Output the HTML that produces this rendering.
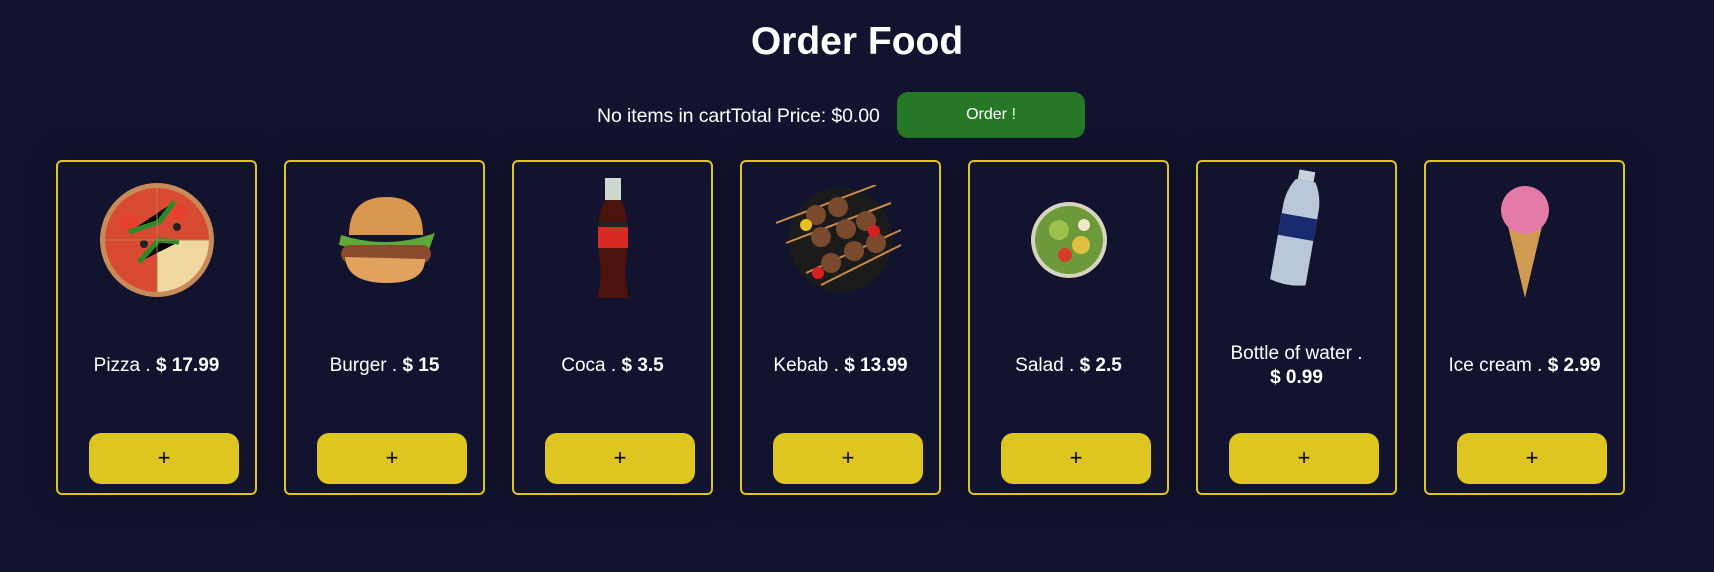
<!DOCTYPE html>
<html><head><meta charset="utf-8"><style>
*{margin:0;padding:0;box-sizing:border-box}
body{width:1714px;height:572px;background:#12132f;font-family:"Liberation Sans",sans-serif;color:#fff;position:relative;overflow:hidden}
h1{position:absolute;top:20px;left:0;width:1714px;text-align:center;font-size:39px;font-weight:bold}
.cart{position:absolute;left:597px;top:105px;font-size:19.5px;letter-spacing:-0.1px}
.order{position:absolute;left:897px;top:92px;width:188px;height:46px;background:#267826;border-radius:11px;color:#fff;font-size:16px;text-align:center;line-height:46px}
.card{position:absolute;top:160px;width:201px;height:335px;border:2px solid #e0c41f;border-radius:6px;box-shadow:0 0 30px rgba(0,0,0,.35)}
.img{position:absolute;left:0;top:8px;width:197px;height:140px;display:flex;align-items:center;justify-content:center}
.name{position:absolute;left:0;width:197px;top:192px;text-align:center;font-size:19px;line-height:24px}
.name b{font-weight:bold}
.btn{position:absolute;left:31px;top:271px;width:150px;height:51px;background:#dfc520;border-radius:12px;color:#000;font-size:22px;text-align:center;line-height:50px}
</style></head><body>
<h1>Order Food</h1>
<div class="cart">No items in cartTotal Price: $0.00</div>
<div class="order">Order !</div>

<div class="card" style="left:56px"><div class="img"><svg width="116" height="116" viewBox="0 0 116 116"><circle cx="58" cy="58" r="57" fill="#c98a5a"/><circle cx="58" cy="58" r="52" fill="#d94a33"/><path d="M58 58 L110 58 A52 52 0 0 1 58 110Z" fill="#f1d7a0"/><circle cx="30" cy="40" r="9" fill="#e8402e"/><circle cx="80" cy="30" r="8" fill="#e8402e"/><circle cx="45" cy="62" r="4" fill="#222"/><circle cx="78" cy="45" r="4" fill="#222"/><path d="M30 50 L60 40 L75 20 M40 80 L60 58 L80 60" stroke="#2a8a2a" stroke-width="5"/><path d="M6 58H110M58 6V110" stroke="#b5804f" stroke-width="1"/></svg></div><div class="name">Pizza . <b>$ 17.99</b></div><div class="btn">+</div></div>

<div class="card" style="left:284px"><div class="img"><svg width="116" height="90" viewBox="0 0 116 90"><path d="M14 40 Q60 55 108 38 L100 60 Q60 62 12 50Z" fill="#5fa83a"/><path d="M22 40 Q22 2 60 2 Q96 2 96 40Z" fill="#d9964d"/><rect x="14" y="50" width="90" height="18" rx="9" fill="#8a4a2e"/><path d="M18 62 Q20 88 60 88 Q98 88 98 64Z" fill="#e0a25c"/></svg></div><div class="name">Burger . <b>$ 15</b></div><div class="btn">+</div></div>

<div class="card" style="left:512px"><div class="img"><svg width="40" height="124" viewBox="0 0 40 124"><path d="M14 0H26V20Q34 30 34 46V80Q30 96 36 120H4Q10 96 6 80V46Q6 30 14 20Z" fill="#4a140c"/><rect x="12" y="0" width="16" height="22" fill="#cfd8d0"/><rect x="5" y="44" width="30" height="26" fill="#d82a23"/><rect x="5" y="44" width="30" height="5" fill="#222"/></svg></div><div class="name">Coca . <b>$ 3.5</b></div><div class="btn">+</div></div>

<div class="card" style="left:740px"><div class="img"><svg width="130" height="110" viewBox="0 0 130 110"><circle cx="65" cy="55" r="52" fill="#1b1b1b"/><path d="M0 38 L100 0 M10 58 L115 18 M30 88 L125 45 M45 100 L125 60" stroke="#c98a4a" stroke-width="2"/><g fill="#7a4a2e"><circle cx="40" cy="30" r="10"/><circle cx="62" cy="22" r="10"/><circle cx="45" cy="52" r="10"/><circle cx="70" cy="44" r="10"/><circle cx="90" cy="36" r="10"/><circle cx="55" cy="78" r="10"/><circle cx="78" cy="66" r="10"/><circle cx="100" cy="58" r="10"/></g><circle cx="30" cy="40" r="6" fill="#e8c020"/><circle cx="98" cy="46" r="6" fill="#d82020"/><circle cx="42" cy="88" r="6" fill="#d82020"/></svg></div><div class="name">Kebab . <b>$ 13.99</b></div><div class="btn">+</div></div>

<div class="card" style="left:968px"><div class="img"><svg width="80" height="80" viewBox="0 0 80 80"><circle cx="40" cy="40" r="38" fill="#d8d2c0"/><circle cx="40" cy="40" r="34" fill="#6c9a3a"/><circle cx="30" cy="30" r="10" fill="#9cc04a"/><circle cx="52" cy="45" r="9" fill="#e0c040"/><circle cx="36" cy="55" r="7" fill="#d83a2a"/><circle cx="55" cy="25" r="6" fill="#f0e8c8"/></svg></div><div class="name">Salad . <b>$ 2.5</b></div><div class="btn">+</div></div>

<div class="card" style="left:1196px"><div class="img"><svg width="60" height="125" viewBox="0 0 60 125" style="margin-top:-20px"><g transform="rotate(10 30 62)"><rect x="22" y="2" width="16" height="10" fill="#c8d0d8"/><path d="M20 12H40Q48 25 48 40V115Q30 120 12 115V40Q12 25 20 12Z" fill="#b8c8d8"/><rect x="12" y="48" width="36" height="22" fill="#1a2a70"/></g></svg></div><div class="name" style="top:180px">Bottle of water .<br><b>$ 0.99</b></div><div class="btn">+</div></div>

<div class="card" style="left:1424px"><div class="img"><svg width="60" height="120" viewBox="0 0 60 120"><path d="M12 42 L48 42 L30 118Z" fill="#d09a50"/><circle cx="30" cy="30" r="24" fill="#e47aa8"/></svg></div><div class="name">Ice cream . <b>$ 2.99</b></div><div class="btn">+</div></div>
</body></html>
